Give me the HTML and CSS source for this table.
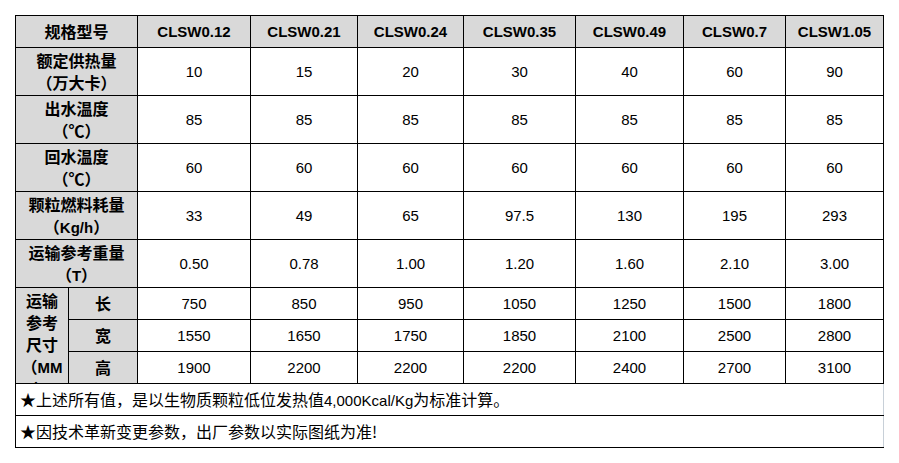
FILE: index.html
```html
<!DOCTYPE html>
<html lang="zh">
<head>
<meta charset="utf-8">
<title>规格参数</title>
<link rel="stylesheet" href="styles.css">
</head>
<body>
<div class="wrap">
<table class="spec">
  <colgroup>
    <col class="c-a"><col class="c-b"><col class="c-1"><col class="c-2"><col class="c-3"><col class="c-4"><col class="c-5"><col class="c-6"><col class="c-7">
  </colgroup>
  <tr class="r-head">
    <th colspan="2" class="lab"><span class="zh">规格型号</span></th>
    <th class="lab">CLSW0.12</th>
    <th class="lab">CLSW0.21</th>
    <th class="lab">CLSW0.24</th>
    <th class="lab">CLSW0.35</th>
    <th class="lab">CLSW0.49</th>
    <th class="lab">CLSW0.7</th>
    <th class="lab">CLSW1.05</th>
  </tr>
  <tr class="r-two">
    <th colspan="2" class="lab"><span class="zh">额定供热量<br>（万大卡）</span></th>
    <td>10</td><td>15</td><td>20</td><td>30</td><td>40</td><td>60</td><td>90</td>
  </tr>
  <tr class="r-two">
    <th colspan="2" class="lab"><span class="zh">出水温度<br>（℃）</span></th>
    <td>85</td><td>85</td><td>85</td><td>85</td><td>85</td><td>85</td><td>85</td>
  </tr>
  <tr class="r-two">
    <th colspan="2" class="lab"><span class="zh">回水温度<br>（℃）</span></th>
    <td>60</td><td>60</td><td>60</td><td>60</td><td>60</td><td>60</td><td>60</td>
  </tr>
  <tr class="r-two">
    <th colspan="2" class="lab"><span class="zh">颗粒燃料耗量<br>（</span>Kg/h<span class="zh">）</span></th>
    <td>33</td><td>49</td><td>65</td><td>97.5</td><td>130</td><td>195</td><td>293</td>
  </tr>
  <tr class="r-two">
    <th colspan="2" class="lab"><span class="zh">运输参考重量<br>（</span>T<span class="zh">）</span></th>
    <td>0.50</td><td>0.78</td><td>1.00</td><td>1.20</td><td>1.60</td><td>2.10</td><td>3.00</td>
  </tr>
  <tr class="r-one">
    <th rowspan="3" class="lab size"><div class="clip"><span class="zh">运输<br>参考<br>尺寸<br>（</span>MM<br><span class="zh">）</span></div></th>
    <th class="lab"><span class="zh">长</span></th>
    <td>750</td><td>850</td><td>950</td><td>1050</td><td>1250</td><td>1500</td><td>1800</td>
  </tr>
  <tr class="r-one">
    <th class="lab"><span class="zh">宽</span></th>
    <td>1550</td><td>1650</td><td>1750</td><td>1850</td><td>2100</td><td>2500</td><td>2800</td>
  </tr>
  <tr class="r-one">
    <th class="lab"><span class="zh">高</span></th>
    <td>1900</td><td>2200</td><td>2200</td><td>2200</td><td>2400</td><td>2700</td><td>3100</td>
  </tr>
  <tr class="r-one">
    <td colspan="9" class="note"><span class="zh">★上述所有值，是以生物质颗粒低位发热值</span>4,000Kcal/Kg<span class="zh">为标准计算。</span></td>
  </tr>
  <tr class="r-one">
    <td colspan="9" class="note"><span class="zh">★因技术革新变更参数，出厂参数以实际图纸为准!</span></td>
  </tr>
</table>
</div>
</body>
</html>
```

FILE: styles.css
```css
html, body {
  margin: 0;
  padding: 0;
  background: #ffffff;
}

.wrap {
  padding: 15px 0 0 15px;
}

.spec {
  border-collapse: collapse;
  table-layout: fixed;
  width: 869px;
  font-family: "Liberation Sans", Arial, sans-serif;
  font-size: 15px;
  line-height: 21px;
  color: #000000;
}

.c-a { width: 53px; }
.c-b { width: 69px; }
.c-1 { width: 113px; }
.c-2 { width: 107px; }
.c-3 { width: 106px; }
.c-4 { width: 112px; }
.c-5 { width: 108px; }
.c-6 { width: 102px; }
.c-7 { width: 98px; }

.spec th,
.spec td {
  border: 1px solid #000000;
  padding: 0;
  text-align: center;
  vertical-align: middle;
  overflow: hidden;
  white-space: nowrap;
}

.spec th {
  background: #d9d9d9;
  font-weight: bold;
}

.r-head { height: 32px; }
.r-two { height: 48px; }
.r-one { height: 32px; }

.zh {
  font-family: "Noto Sans CJK SC", "Noto Sans CJK TC", sans-serif;
  font-size: 16px;
  line-height: 21px;
}

.spec th.size {
  vertical-align: top;
}

.clip {
  height: 95px;
  overflow: hidden;
  padding-top: 2px;
  box-sizing: border-box;
  line-height: 21px;
}

.spec td.note {
  text-align: left;
  padding-left: 4px;
  border-right-color: #c8d0d8;
}
```
